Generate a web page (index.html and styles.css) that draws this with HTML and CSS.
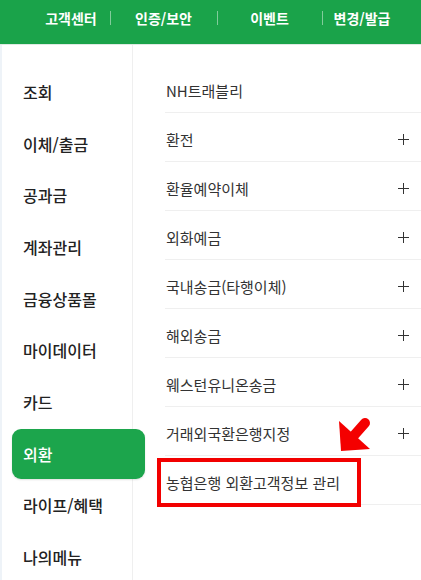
FILE: index.html
```html
<!DOCTYPE html>
<html lang="ko">
<head>
<meta charset="utf-8">
<link rel="stylesheet" href="styles.css">
</head>
<body>
<div class="header">
  <span class="hcell c1">고객센터</span>
  <span class="hcell c2 sep">인증/보안</span>
  <span class="hcell c3 sep">이벤트</span>
  <span class="hcell c4 sep">변경/발급</span>
</div>
<div class="main">
  <nav class="side">
    <div class="side-item">조회</div>
    <div class="side-item">이체/출금</div>
    <div class="side-item">공과금</div>
    <div class="side-item">계좌관리</div>
    <div class="side-item">금융상품몰</div>
    <div class="side-item">마이데이터</div>
    <div class="side-item">카드</div>
    <div class="side-item active">외환</div>
    <div class="side-item">라이프/혜택</div>
    <div class="side-item">나의메뉴</div>
  </nav>
  <div class="content">
    <div class="row"><span>NH트래블리</span></div>
    <div class="row"><span>환전</span><span class="plus"></span></div>
    <div class="row"><span>환율예약이체</span><span class="plus"></span></div>
    <div class="row"><span>외화예금</span><span class="plus"></span></div>
    <div class="row"><span>국내송금(타행이체)</span><span class="plus"></span></div>
    <div class="row"><span>해외송금</span><span class="plus"></span></div>
    <div class="row"><span>웨스턴유니온송금</span><span class="plus"></span></div>
    <div class="row"><span>거래외국환은행지정</span><span class="plus"></span></div>
    <div class="row"><span>농협은행 외환고객정보 관리</span></div>
  </div>
</div>
<div class="highlight"></div>
<svg class="arrow" viewBox="0 0 50 50" width="50" height="50">
  <polygon points="11,41 9,11 40,39" fill="#f40000"/>
  <line x1="20" y1="30" x2="35" y2="13" stroke="#f40000" stroke-width="10" stroke-linecap="round"/>
</svg>
</body>
</html>
```
FILE: styles.css
```css
html, body {
  margin: 0;
  padding: 0;
}
body {
  width: 421px;
  height: 580px;
  overflow: hidden;
  background: #eef3f8;
  font-family: "Noto Sans CJK KR", "Noto Sans", sans-serif;
  color: #222;
  position: relative;
}
.header {
  height: 44px;
  background: #1aa34a;
  display: flex;
  padding-left: 32px;
  border-bottom: 1px solid #dfeae3;
  box-sizing: content-box;
}
.hcell {
  height: 35px;
  display: flex;
  align-items: center;
  justify-content: center;
  color: #fff;
  font-size: 14px;
  font-weight: 700;
  position: relative;
}
.c1 { width: 78px; }
.c2 { width: 107px; }
.c3 { width: 105px; }
.c4 { width: 80px; }
.sep::before {
  content: "";
  position: absolute;
  left: 0;
  top: 11px;
  height: 14px;
  width: 1px;
  background: rgba(255, 255, 255, 0.45);
}
.main {
  display: flex;
  margin-left: 2px;
  background: #fff;
  height: 535px;
}
.side {
  width: 130px;
  flex: none;
  border-right: 1px solid #efefef;
  padding-top: 21px;
}
.side-item {
  height: 51.7px;
  display: flex;
  align-items: center;
  padding-left: 21px;
  font-size: 16px;
  font-weight: 500;
  color: #222;
  box-sizing: border-box;
}
.side-item.active {
  position: relative;
  z-index: 1;
  height: 50px;
  margin: 0.85px 0 0.85px 10px;
  width: 133px;
  padding-left: 11px;
  background: #1ca54c;
  color: #fff;
  border-radius: 9px;
  box-shadow: 0 1px 2px rgba(0, 0, 0, 0.12);
}
.content {
  flex: 1;
  padding-top: 19px;
  padding-left: 32px;
}
.row {
  height: 49px;
  box-sizing: border-box;
  border-bottom: 1px solid #efefef;
  display: flex;
  align-items: center;
  justify-content: space-between;
  padding: 4px 12px 0 1px;
  font-size: 15px;
  color: #333;
}
.plus {
  width: 11px;
  height: 11px;
  position: relative;
}
.plus::before, .plus::after {
  content: "";
  position: absolute;
  background: #333;
}
.plus::before {
  left: 0;
  top: 5px;
  width: 11px;
  height: 1.3px;
}
.plus::after {
  left: 5px;
  top: 0;
  width: 1.3px;
  height: 11px;
}
.highlight {
  position: absolute;
  left: 157px;
  top: 458px;
  width: 204px;
  height: 49px;
  box-sizing: border-box;
  border: 4px solid #f20000;
}
.arrow {
  position: absolute;
  left: 330px;
  top: 410px;
}
```
